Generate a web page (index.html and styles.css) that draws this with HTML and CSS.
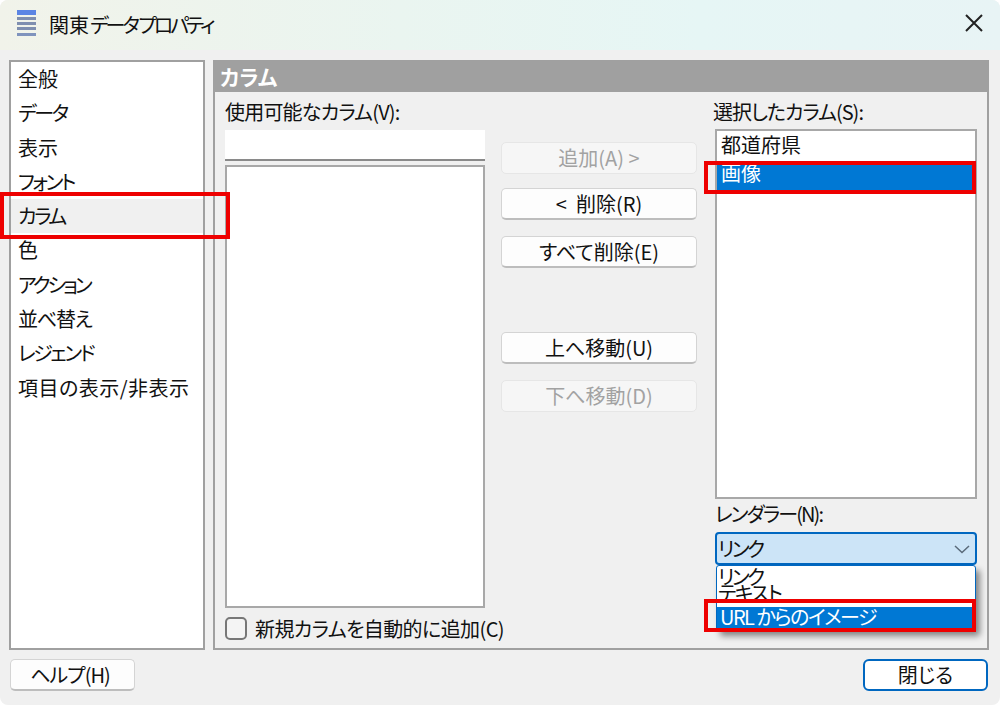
FILE: index.html
```html
<!DOCTYPE html>
<html lang="ja">
<head>
<meta charset="utf-8">
<title>関東データ プロパティ</title>
<link rel="stylesheet" href="styles.css">
</head>
<body>
<div class="dialog">
  <header class="titlebar">
    <svg class="app-icon" width="20" height="27" viewBox="0 0 20 27">
      <rect x="0" y="0" width="19" height="5" fill="#5b85e4"/>
      <rect x="0" y="7" width="19" height="3" fill="#7f8fb0"/>
      <rect x="0" y="12" width="19" height="3" fill="#7f8fb0"/>
      <rect x="0" y="17" width="19" height="3" fill="#7f8fb0"/>
      <rect x="0" y="23" width="19" height="3" fill="#7f93bd"/>
    </svg>
    <span class="title">関東<span class="title-kana">データ プロパティ</span></span>
    <svg class="close-icon" width="20" height="20" viewBox="0 0 20 20">
      <path d="M2 2 L18 18 M18 2 L2 18" stroke="#222" stroke-width="2" fill="none"/>
    </svg>
  </header>

  <main class="body">
    <nav class="nav">
      <div class="nav-item">全般</div>
      <div class="nav-item kana">データ</div>
      <div class="nav-item">表示</div>
      <div class="nav-item kana">フォント</div>
      <div class="nav-item is-active kana">カラム</div>
      <div class="nav-item">色</div>
      <div class="nav-item kana-wide">アクション</div>
      <div class="nav-item mixed">並べ替え</div>
      <div class="nav-item kana">レジェンド</div>
      <div class="nav-item long">項目の表示/非表示</div>
    </nav>

    <section class="panel">
      <h2 class="panel-head">カラム</h2>
      <div class="panel-grid">
        <div class="col col-left">
          <div class="label">使用可能なカラム(V):</div>
          <div class="search"></div>
          <div class="listbox listbox-left"></div>
          <div class="check-row">
            <span class="checkbox"></span>
            <span>新規カラムを自動的に追加(C)</span>
          </div>
        </div>

        <div class="col col-mid">
          <div class="btn is-disabled">追加(A) &gt;</div>
          <div class="btn gap-s">&lt;&nbsp;&nbsp;削除(R)</div>
          <div class="btn gap-m">すべて削除(E)</div>
          <div class="btn gap-l">上へ移動(U)</div>
          <div class="btn gap-m is-disabled">下へ移動(D)</div>
        </div>

        <div class="col col-right">
          <div class="label label-selected">選択したカラム(S):</div>
          <div class="listbox listbox-right">
            <div class="row">都道府県</div>
            <div class="row is-selected">画像</div>
          </div>
          <div class="label label-renderer">レンダラー(N):</div>
          <div class="combo-wrap">
            <div class="combo">
              <span class="tight">リンク</span>
              <svg width="18" height="10" viewBox="0 0 18 10">
                <path d="M2 2 L9 8.5 L16 2" stroke="#5a6a7a" stroke-width="1.5" fill="none"/>
              </svg>
            </div>
            <div class="dropdown">
              <div class="opt tight">リンク</div>
              <div class="opt tight-s">テキスト</div>
              <div class="opt-selected">URL からのイメージ</div>
            </div>
          </div>
        </div>
      </div>
    </section>
  </main>

  <footer class="footer">
    <div class="btn foot-btn help">ヘルプ(H)</div>
    <div class="btn foot-btn is-default">閉じる</div>
  </footer>

  <div class="mark mark-nav"></div>
  <div class="mark mark-list"></div>
  <div class="mark mark-drop"></div>
</div>
</body>
</html>
```

FILE: styles.css
```css
* { box-sizing: border-box; }
html, body { margin: 0; padding: 0; background: #fff; }
body {
  font-family: "Noto Sans CJK JP", "Noto Sans", sans-serif;
  font-size: 20px;
  font-feature-settings: "palt";
  color: #111;
}
.dialog {
  position: relative;
  width: 1000px;
  height: 705px;
  background: #f0f0f0;
  border-radius: 8px;
  overflow: hidden;
}
.titlebar {
  display: flex;
  align-items: center;
  height: 50px;
  padding: 0 17px;
  background: linear-gradient(90deg, #f1f3ea 0%, #eaf5f0 40%, #e6f6f5 70%, #e8f4f5 100%);
}
.app-icon { margin: 0 12px 3px 0; flex: none; }
.title { line-height: 46px; white-space: nowrap; }
.title-kana { letter-spacing: -3px; margin-left: 1px; }
.close-icon { margin: 0 0 4px auto; position: relative; left: 1px; }

.body {
  display: flex;
  gap: 8px;
  height: 590px;
  margin-top: 10px;
  padding: 0 11px 0 9px;
}
.nav {
  width: 196px;
  flex: none;
  background: #fff;
  border: 2px solid #a0a0a0;
}
.nav-item {
  height: 34.3px;
  line-height: 33px;
  padding-left: 7px;
  white-space: nowrap;
}
.nav-item.kana { letter-spacing: -2.4px; }
.nav-item.kana-wide { letter-spacing: -3px; }
.nav-item.mixed { letter-spacing: -1.2px; }
.nav-item.long { letter-spacing: 0.5px; }
.nav-item.is-active { background: #f0f0f0; }

.panel {
  flex: 1;
  display: flex;
  flex-direction: column;
  border: 2px solid #a0a0a0;
  border-top: 0;
  min-width: 0;
}
.panel-head {
  margin: 0;
  height: 32px;
  line-height: 33px;
  padding-left: 5px;
  background: #a0a0a0;
  color: #fff;
  font-size: 21px;
  font-weight: 700;
}
.panel-grid {
  flex: 1;
  display: grid;
  grid-template-columns: 260px 196px 262px;
  column-gap: 16px;
  padding: 8px 10px 4px 10px;
  min-height: 0;
}
.col { display: flex; flex-direction: column; min-width: 0; }
.label { height: 26px; line-height: 24px; white-space: nowrap; letter-spacing: -0.8px; }
.label-selected { margin-left: -2px; letter-spacing: -1px; }
.search {
  height: 31px;
  margin-top: 4px;
  background: #fff;
  border-bottom: 2px solid #8a8a8a;
}
.listbox { background: #fff; border: 2px solid #a8a8a8; }
.listbox-left { flex: 1; margin-top: 4px; }
.check-row {
  display: flex;
  align-items: center;
  gap: 8px;
  height: 32px;
  margin-top: 4px;
  line-height: 27px;
  white-space: nowrap;
  letter-spacing: -0.6px;
}
.checkbox {
  width: 22px;
  height: 23px;
  flex: none;
  background: #f4f4f4;
  border: 2px solid #777;
  border-radius: 5px;
}

.col-mid { padding-top: 42px; }
.btn {
  display: flex;
  align-items: center;
  justify-content: center;
  height: 32px;
  line-height: 26px;
  background: #fdfdfd;
  border: 1px solid #d4d4d4;
  border-bottom: 2px solid #bdbdbd;
  border-radius: 5px;
  white-space: nowrap;
}
.btn.is-disabled {
  background: #f6f6f6;
  border: 1px solid #e6e6e6;
  color: #a2a2a2;
}
.gap-s { margin-top: 14px; }
.gap-m { margin-top: 16px; }
.gap-l { margin-top: 64px; }

.col-right { margin-left: 2px; margin-right: -2px; }
.listbox-right { height: 370px; margin-top: 3px; flex: none; }
.row { height: 30px; line-height: 28px; padding-left: 4px; }
.row.is-selected { background: #0078d4; color: #fff; height: 29px; line-height: 22px; margin-top: 1px; }
.label-renderer { margin-top: 3px; letter-spacing: -1.9px; }
.combo-wrap { position: relative; margin-top: 4px; }
.combo {
  display: flex;
  align-items: center;
  justify-content: space-between;
  height: 33px;
  line-height: 27px;
  padding: 0 4px 0 1px;
  background: #cce4f7;
  border: 2px solid #0067c0;
  border-radius: 4px;
}
.tight { letter-spacing: -2.5px; }
.tight-s { letter-spacing: -1.6px; }
.dropdown {
  position: absolute;
  top: 33px;
  left: 1px;
  right: 1px;
  height: 66px;
  background: #fff;
  border: 1px solid #0067c0;
  border-radius: 3px;
  box-shadow: 4px 5px 6px rgba(0, 0, 0, 0.45);
  overflow: hidden;
}
.opt { height: 16px; line-height: 21px; padding-left: 1px; white-space: nowrap; }
.opt-selected {
  position: absolute;
  left: 0;
  right: 0;
  bottom: 0;
  height: 23px;
  line-height: 20px;
  padding-left: 3px;
  background: #0078d4;
  color: #fff;
  white-space: nowrap;
  letter-spacing: -1.5px;
}

.footer {
  display: flex;
  justify-content: space-between;
  padding: 9px 12px 0 10px;
}
.foot-btn { width: 125px; height: 32px; }
.help { letter-spacing: -1px; padding-right: 5px; }
.is-default { border: 2px solid #0067c0; border-radius: 6px; background: #fff; }

.mark { position: absolute; border: 4px solid #ee0000; pointer-events: none; }
.mark-nav { left: 0; top: 192px; width: 230px; height: 47px; }
.mark-list { left: 704px; top: 161px; width: 272px; height: 33px; }
.mark-drop { left: 704px; top: 599px; width: 272px; height: 33px; }
```
